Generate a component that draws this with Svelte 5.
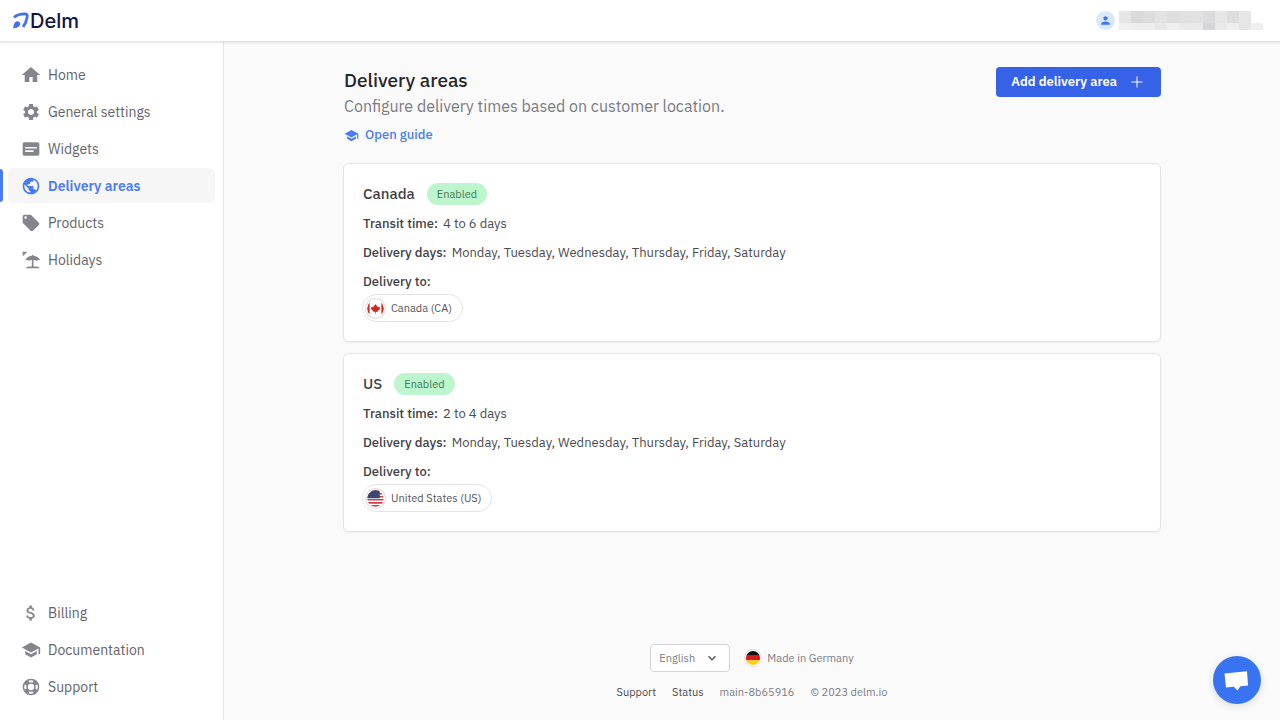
<script lang="ts">
  type NavItem = { label: string; icon: string; active?: boolean };

  const icons: Record<string, string> = {
    home: "M10 20.500v-6h4v6h5.500v-8.500H23L12 2.500 1 12h3.500v8.500z",
    settings:
      "M19.14 12.94c.04-.3.06-.61.06-.94 0-.32-.02-.64-.07-.94l2.03-1.58c.18-.14.23-.41.12-.61l-1.92-3.32c-.12-.22-.37-.29-.59-.22l-2.39.96c-.5-.38-1.03-.7-1.62-.94l-.36-2.54c-.04-.24-.24-.41-.48-.41h-3.84c-.24 0-.43.17-.47.41l-.36 2.54c-.59.24-1.13.57-1.62.94l-2.39-.96c-.22-.08-.47 0-.59.22L2.74 8.87c-.12.21-.08.47.12.61l2.03 1.58c-.05.3-.09.63-.09.94s.02.64.07.94l-2.03 1.58c-.18.14-.23.41-.12.61l1.92 3.32c.12.22.37.29.59.22l2.39-.96c.5.38 1.03.7 1.62.94l.36 2.54c.05.24.24.41.48.41h3.84c.24 0 .44-.17.47-.41l.36-2.54c.59-.24 1.13-.56 1.62-.94l2.39.96c.22.08.47 0 .59-.22l1.92-3.32c.12-.22.07-.47-.12-.61l-2.01-1.58zM12 15.6c-1.98 0-3.6-1.62-3.6-3.6s1.62-3.6 3.6-3.6 3.6 1.62 3.6 3.6-1.62 3.6-3.6 3.6z",
    widgets:
      "M20 4H4c-1.1 0-2 .9-2 2v12c0 1.1.9 2 2 2h16c1.1 0 2-.9 2-2V6c0-1.1-.9-2-2-2zM5 9.500h14v2H5zM5 13.500h10v2H5z",
    globe:
      "M12 2C6.48 2 2 6.48 2 12s4.48 10 10 10 10-4.48 10-10S17.52 2 12 2zm-1 17.93c-3.95-.49-7-3.85-7-7.93 0-.62.08-1.21.21-1.79L9 15v1c0 1.1.9 2 2 2v1.93zm6.9-2.54c-.26-.81-1-1.39-1.9-1.39h-1v-3c0-.55-.45-1-1-1H8v-2h2c.55 0 1-.45 1-1V7h2c1.1 0 2-.9 2-2v-.41c2.93 1.19 5 4.06 5 7.41 0 2.08-.8 3.97-2.1 5.39z",
    tag: "M21.41 11.58l-9-9C12.05 2.22 11.55 2 11 2H4c-1.1 0-2 .9-2 2v7c0 .55.22 1.05.59 1.42l9 9c.36.36.86.58 1.41.58.55 0 1.05-.22 1.41-.59l7-7c.37-.36.59-.86.59-1.41 0-.55-.23-1.06-.59-1.42zM5.5 7C4.67 7 4 6.33 4 5.5S4.67 4 5.5 4 7 4.67 7 5.5 6.33 7 5.5 7z",
    beach:
      "M2 2h5c0 1.600-1 2.200-2.400 2.400C4.400 6 3.600 7 2 7zM13.200 6h1.600v.8c4.200.3 7.200 2.400 8.200 5.700-1.700-.7-3.200-.6-4.500.3-1.100-.8-2.200-1-3.500-.7v7.600h3.500c1.800 0 3.300.9 4 2.300h-17c.7-1.400 2.200-2.300 4-2.300H13v-7.600c-1.300-.3-2.400-.1-3.500.7-1.300-.9-2.800-1-4.500-.3 1-3.300 4-5.400 8.200-5.700z",
    dollar:
      "M11.8 10.9c-2.27-.59-3-1.2-3-2.15 0-1.09 1.01-1.85 2.7-1.85 1.78 0 2.44.85 2.5 2.1h2.21c-.07-1.72-1.12-3.3-3.21-3.81V3h-3v2.16c-1.94.42-3.5 1.68-3.5 3.61 0 2.31 1.91 3.46 4.7 4.13 2.5.6 3 1.48 3 2.41 0 .69-.49 1.79-2.7 1.79-2.06 0-2.87-.92-2.98-2.1h-2.2c.12 2.19 1.76 3.42 3.68 3.83V21h3v-2.15c1.95-.37 3.5-1.5 3.5-3.55 0-2.84-2.43-3.81-4.7-4.4z",
    school:
      "M5 13.180v4L12 21l7-3.820v-4L12 17l-7-3.820zM12 3L1 9l11 6 9-4.910V17h2V9L12 3z",
    support:
      "M12 2a10 10 0 0 0 0 20 10 10 0 0 0 0-20zM9 4.400a8.200 8.200 0 0 1 6 0l-.9 2.300a5.800 5.800 0 0 0-4.200 0zM19.600 9a8.200 8.200 0 0 1 0 6l-2.300-.9a5.800 5.800 0 0 0 0-4.200zM15 19.600a8.200 8.200 0 0 1-6 0l.9-2.300a5.800 5.800 0 0 0 4.200 0zM4.400 15a8.200 8.200 0 0 1 0-6l2.300.9a5.800 5.800 0 0 0 0 4.200zM12 8.200a3.800 3.800 0 0 0 0 7.600 3.800 3.800 0 0 0 0-7.600z",
    person:
      "M12 12c2.210 0 4-1.790 4-4s-1.790-4-4-4-4 1.790-4 4 1.790 4 4 4zm0 2c-2.670 0-8 1.340-8 4v2h16v-2c0-2.660-5.330-4-8-4z",
  };

  const mainNav: NavItem[] = [
    { label: "Home", icon: "home" },
    { label: "General settings", icon: "settings" },
    { label: "Widgets", icon: "widgets" },
    { label: "Delivery areas", icon: "globe", active: true },
    { label: "Products", icon: "tag" },
    { label: "Holidays", icon: "beach" },
  ];

  const bottomNav: NavItem[] = [
    { label: "Billing", icon: "dollar" },
    { label: "Documentation", icon: "school" },
    { label: "Support", icon: "support" },
  ];

  const areas = [
    {
      name: "Canada",
      transit: "4 to 6 days",
      days: "Monday, Tuesday, Wednesday, Thursday, Friday, Saturday",
      country: "Canada (CA)",
      flag: "ca",
    },
    {
      name: "US",
      transit: "2 to 4 days",
      days: "Monday, Tuesday, Wednesday, Thursday, Friday, Saturday",
      country: "United States (US)",
      flag: "us",
    },
  ];

  // shades of the hidden account name, one list per row of blocks
  const mask = [
    ["#e6e6e6", "#dadadc", "#dddddd", "#e3e3e3", "#dedede", "#e1e1e1", "#e1e1e1", "#dbdbde", "#e6e6e6", "#dddddd", "#e7e7e7"],
    ["#f0f0f0", "#ededed", "#ededed", "#e7e7e7", "#efefef", "#eaeaea", "#e9e9e9", "#d6d6d6", "#e9e9e9", "#eeeeee", "#e6e6e6", "#efefef"],
  ];

  let language = $state("English");
</script>

{#snippet icon(name: string)}
  <svg class="icon" viewBox="0 0 24 24" aria-hidden="true">
    <path d={icons[name]} fill-rule="evenodd" />
  </svg>
{/snippet}

{#snippet flag(code: string)}
  <svg class="flag" viewBox="0 0 20 20" aria-hidden="true">
    <defs>
      <clipPath id="clip-{code}"><circle cx="10" cy="10" r="7.900" /></clipPath>
    </defs>
    <circle cx="10" cy="10" r="9.500" fill="#fff" stroke="#dcdce0" />
    <g clip-path="url(#clip-{code})">
      {#if code === "ca"}
        <path d="M0 0h4.400v20H0zM15.600 0H20v20h-4.400z" fill="#d02a26" />
        <path
          d="M10 5.600l1 1.700.9-.4-.3 2 1.200-.9.3.8 1.400-.1-.6 1.300.5.500-2.500 2 .2.900-1.800-.2V15h-.6v-1.800l-1.800.2.2-.9-2.500-2 .5-.5-.6-1.300 1.400.1.300-.8 1.200.9-.3-2 .9.4z"
          fill="#d02a26"
        />
      {:else if code === "us"}
        <path d="M0 0h20v20H0z" fill="#fff" />
        <path
          d="M0 1.800h20v1.500H0zM0 4.700h20v1.500H0zM0 7.600h20v1.500H0zM0 10.500h20v1.500H0zM0 13.400h20v1.500H0zM0 16.300h20v1.700H0z"
          fill="#c9414a"
        />
        <path d="M0 0h14v9.800H0z" fill="#34416f" />
        <path
          d="M5 4h.8M8 4h.8M11 4h.8M3.500 6h.8M6.500 6h.8M9.500 6h.8M12 6h.8M5 8h.8M8 8h.8M11 8h.8"
          stroke="#8d96b5"
          stroke-width=".6"
        />
      {:else}
        <path d="M0 0h20v7.500H0z" fill="#111" />
        <path d="M0 7.500h20v5H0z" fill="#dd1c1c" />
        <path d="M0 12.500h20V20H0z" fill="#ffce1f" />
      {/if}
    </g>
  </svg>
{/snippet}

{#snippet navList(items: NavItem[])}
  <ul class="nav-list">
    {#each items as item (item.label)}
      <li class="nav-item" class:active={item.active}>
        <a href="#top" aria-current={item.active ? "page" : undefined}>
          {@render icon(item.icon)}
          {item.label}
        </a>
      </li>
    {/each}
  </ul>
{/snippet}

<div class="app" id="top">
  <header class="topbar">
    <a class="logo" href="#top">
      <svg viewBox="0 0 17 18" aria-hidden="true">
        <path
          d="M1 5.600C4 3.200 8.500 2 12.300 2c2.600 0 3.200 1 2.700 3.500-.6 3.500-2 7-4.300 10.500"
          fill="none"
          stroke="#4070f8"
          stroke-width="3"
        />
        <path d="M.2 17.400c.2-2.700.8-4.600 1.800-6 1.200-1.600 3.300-2.100 4.700-.8 1.500 1.400 1.100 3.700-.5 4.900-1.400 1.100-3.400 1.700-6 1.900z" fill="#4070f8" />
      </svg>
      <span>Delm</span>
    </a>
    <div class="account">
      <span class="avatar">{@render icon("person")}</span>
      <svg class="mask" viewBox="0 0 144 19" role="img" aria-label="Account">
        {#each mask as row, y}
          {#each row as shade, x}
            <rect x={x * 12} y={y * 12} width="12" height={y ? 7 : 12} fill={shade} />
          {/each}
        {/each}
      </svg>
    </div>
  </header>

  <div class="body">
    <nav class="sidebar" aria-label="Main">
      {@render navList(mainNav)}
      {@render navList(bottomNav)}
    </nav>

    <div class="content">
      <main class="container">
        <div class="page-header">
          <div>
            <h1>Delivery areas</h1>
            <p>Configure delivery times based on customer location.</p>
            <a class="guide" href="#top">{@render icon("school")}Open guide</a>
          </div>
          <button class="add" type="button">
            Add delivery area
            <svg viewBox="0 0 12 12" aria-hidden="true"><path d="M6 .5v11M.5 6h11" /></svg>
          </button>
        </div>

        <div class="cards">
          {#each areas as area (area.name)}
            <section class="card">
              <div class="card-title">
                <h2>{area.name}</h2>
                <span class="badge">Enabled</span>
              </div>
              <dl>
                <div class="row">
                  <dt>Transit time:</dt>
                  <dd>{area.transit}</dd>
                </div>
                <div class="row">
                  <dt>Delivery days:</dt>
                  <dd>{area.days}</dd>
                </div>
                <div class="targets">
                  <dt>Delivery to:</dt>
                  <dd class="chip">{@render flag(area.flag)}{area.country}</dd>
                </div>
              </dl>
            </section>
          {/each}
        </div>
      </main>

      <footer>
        <div class="footer-row">
          <div class="language">
            <select bind:value={language} aria-label="Language">
              <option>English</option>
              <option>Deutsch</option>
            </select>
            <svg viewBox="0 0 10 10" aria-hidden="true"><path d="M1.500 3.200L5 6.700l3.500-3.500" /></svg>
          </div>
          <span class="made-in">{@render flag("de")}Made in Germany</span>
        </div>
        <div class="footer-links">
          <a href="#top">Support</a>
          <a href="#top">Status</a>
          <span>main-8b65916</span>
          <span>© 2023 delm.io</span>
        </div>
      </footer>
    </div>
  </div>

  <button class="chat" type="button" aria-label="Open chat">
    <svg viewBox="0 0 48 48" aria-hidden="true">
      <path d="M11.500 17.500l22.500-2.300 1 14.300-7.600.7-3 4.300-3.400-3.700-8 .6z" />
    </svg>
  </button>
</div>

<style>
  :global(body) {
    margin: 0;
    background: #fafafa;
  }

  .app {
    min-height: 100vh;
    display: flex;
    flex-direction: column;
    background: #fafafa;
    color: #3f3f46;
    font-family: "IBM Plex Sans", Roboto, sans-serif;
    font-size: 13px;
    line-height: 20px;
  }

  a {
    color: inherit;
    text-decoration: none;
  }

  h1,
  h2,
  p,
  dl,
  dd,
  ul {
    margin: 0;
    padding: 0;
  }

  .icon {
    width: 20px;
    height: 20px;
    fill: currentColor;
    flex-shrink: 0;
  }

  .topbar {
    display: flex;
    align-items: center;
    justify-content: space-between;
    height: 41px;
    padding: 0 17px 0 13px;
    background: #fff;
    border-bottom: 1px solid #e4e4e7;
    box-shadow: 0 1px 2px rgba(0, 0, 0, 0.1);
    z-index: 1;
  }

  .logo {
    display: flex;
    align-items: center;
    gap: 1px;
    color: #10163a;
    font-family: Inter, sans-serif;
    font-size: 20px;
    font-weight: 500;
    line-height: 24px;
  }

  .logo svg {
    width: 16px;
    height: 17px;
  }

  .account {
    display: flex;
    align-items: center;
    gap: 4px;
  }

  .avatar {
    display: grid;
    place-items: center;
    width: 19px;
    height: 19px;
    border-radius: 50%;
    background: #dbe7fe;
    color: #3b76f6;
  }

  .avatar .icon {
    width: 13px;
    height: 13px;
  }

  .mask {
    width: 144px;
    height: 19px;
  }

  .body {
    flex: 1;
    display: flex;
  }

  .sidebar {
    box-sizing: border-box;
    width: 224px;
    flex-shrink: 0;
    display: flex;
    flex-direction: column;
    justify-content: space-between;
    padding: 15px 8px 16px;
    background: #fff;
    border-right: 1px solid #e4e4e7;
  }

  .nav-list {
    display: flex;
    flex-direction: column;
    gap: 2px;
    list-style: none;
  }

  .nav-item {
    position: relative;
  }

  .nav-item a {
    display: flex;
    align-items: center;
    gap: 7px;
    height: 35px;
    padding-left: 13px;
    border-radius: 6px;
    color: #63636b;
    font-size: 14px;
  }

  .nav-item .icon {
    color: #85858d;
  }

  .nav-item.active a {
    background: #f6f6f7;
    color: #4a7bf7;
    font-weight: 600;
  }

  .nav-item.active .icon {
    color: #4a7bf7;
  }

  .nav-item.active::before {
    content: "";
    position: absolute;
    left: -8px;
    top: 1px;
    bottom: 1px;
    width: 3px;
    border-radius: 0 4px 4px 0;
    background: #4a7bf7;
  }

  .content {
    flex: 1;
    display: flex;
    flex-direction: column;
    justify-content: space-between;
    gap: 32px;
    padding: 25px 24px 18px;
  }

  .container {
    width: 100%;
    max-width: 818px;
    margin: 0 auto;
  }

  .page-header {
    display: flex;
    align-items: flex-start;
    justify-content: space-between;
    margin-bottom: 18px;
    padding-left: 1px;
  }

  h1 {
    color: #27272a;
    font-size: 19px;
    font-weight: 500;
    line-height: 27px;
  }

  .page-header p {
    margin-bottom: 6px;
    color: #7b7b83;
    font-size: 16px;
    line-height: 25px;
  }

  .guide {
    display: flex;
    align-items: center;
    gap: 6px;
    color: #4a7bf7;
    font-weight: 500;
  }

  .guide .icon {
    width: 15px;
    height: 15px;
  }

  .add {
    display: flex;
    align-items: center;
    gap: 14px;
    height: 30px;
    padding: 0 18px 0 15px;
    border: 0;
    border-radius: 4px;
    background: #3662e8;
    color: #fff;
    font: inherit;
    font-weight: 600;
  }

  .add svg {
    width: 12px;
    height: 12px;
    stroke: #fff;
  }

  .cards {
    display: flex;
    flex-direction: column;
    gap: 11px;
  }

  .card {
    padding: 19px;
    background: #fff;
    border: 1px solid #e4e4e7;
    border-radius: 6px;
    box-shadow: 0 1px 2px rgba(0, 0, 0, 0.05);
  }

  .card-title {
    display: flex;
    align-items: center;
    gap: 12px;
    margin-bottom: 9px;
  }

  h2 {
    font-size: 15px;
    font-weight: 500;
  }

  .badge {
    padding: 0 10px;
    border-radius: 11px;
    background: #bdf5cd;
    color: #3d7a52;
    font-size: 11px;
    line-height: 22px;
  }

  .row {
    display: flex;
    gap: 5px;
    margin-bottom: 9px;
  }

  dt {
    font-weight: 500;
  }

  dd {
    color: #4b4b52;
  }

  .targets {
    display: flex;
    flex-direction: column;
    align-items: flex-start;
    gap: 2px;
  }

  .chip {
    display: flex;
    align-items: center;
    gap: 5px;
    padding: 3px 10px 3px 2px;
    border: 1px solid #e4e4e7;
    border-radius: 14px;
    margin-left: -1px;
    color: #52525b;
    font-size: 11px;
  }

  .flag {
    width: 21px;
    height: 21px;
    margin: -1px 0;
    flex-shrink: 0;
  }

  footer {
    display: flex;
    flex-direction: column;
    align-items: center;
    gap: 10px;
    color: #7b7b83;
    font-size: 11px;
  }

  .footer-row {
    display: flex;
    align-items: center;
    gap: 14px;
  }

  .language {
    display: grid;
    align-items: center;
  }

  .language select,
  .language svg {
    grid-area: 1 / 1;
  }

  .language select {
    appearance: none;
    width: 80px;
    height: 28px;
    padding: 0 8px;
    border: 1px solid #d4d4d8;
    border-radius: 4px;
    background: #fff;
    color: #7b7b83;
    font: inherit;
  }

  .language svg {
    justify-self: end;
    width: 10px;
    height: 10px;
    margin-right: 13px;
    fill: none;
    stroke: #55555c;
    stroke-width: 1.4;
    pointer-events: none;
  }

  .made-in {
    display: flex;
    align-items: center;
    gap: 5px;
  }

  .made-in .flag {
    width: 18px;
    height: 18px;
  }

  .footer-links {
    display: flex;
    gap: 16px;
  }

  .footer-links a {
    color: #4b4b52;
  }

  .chat {
    position: fixed;
    right: 19px;
    bottom: 16px;
    width: 48px;
    height: 48px;
    padding: 0;
    border: 0;
    border-radius: 50%;
    background: #3874f2;
    box-shadow: 0 2px 8px rgba(0, 0, 0, 0.12);
  }

  .chat svg {
    display: block;
    width: 48px;
    height: 48px;
    fill: #fff;
  }
</style>
